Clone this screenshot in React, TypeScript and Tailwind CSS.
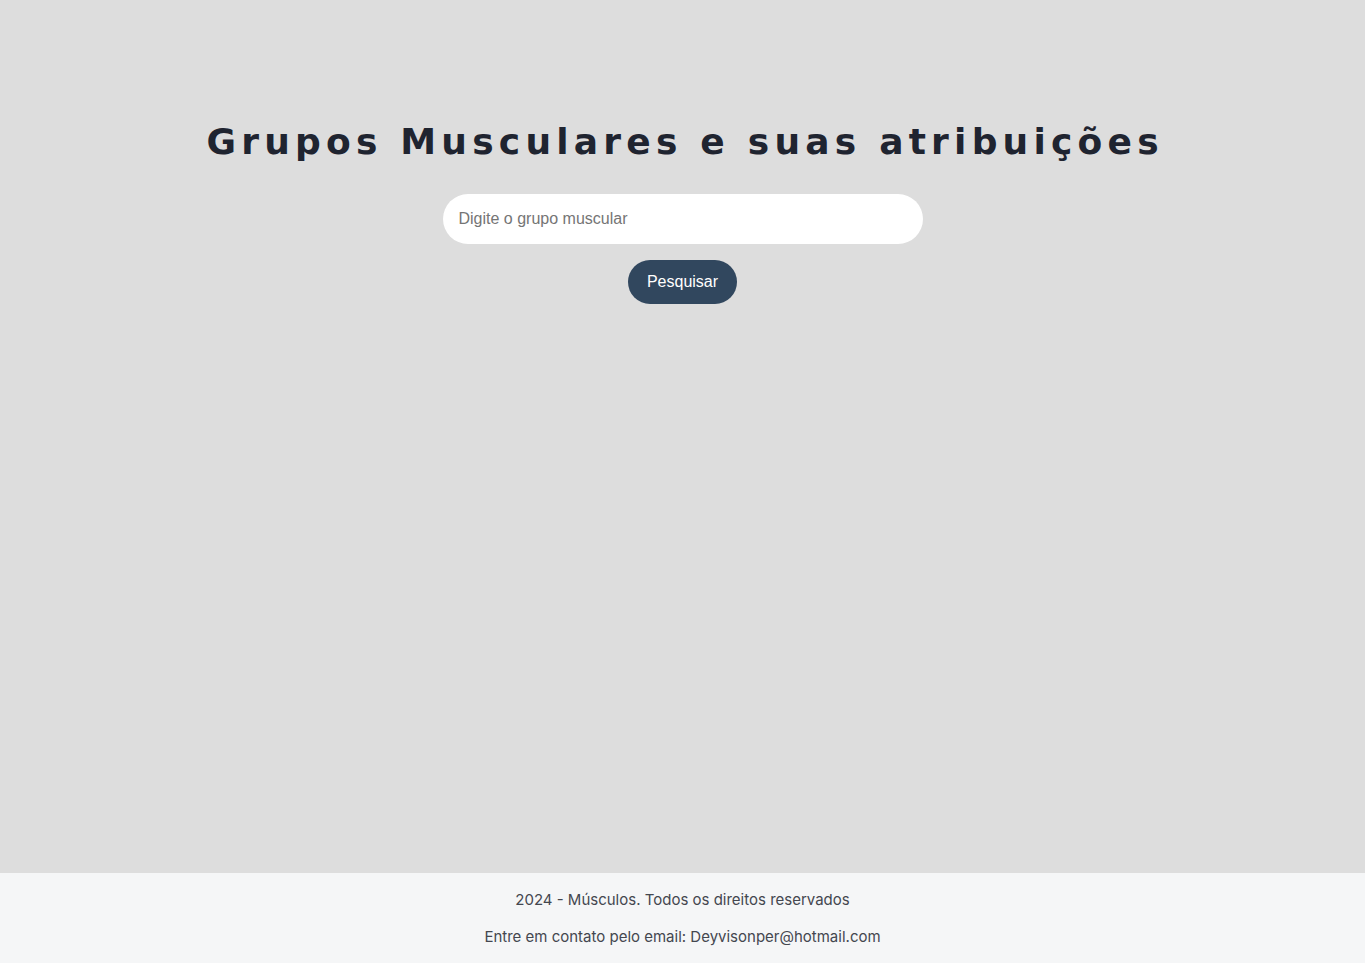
export default function App() {
  return (
    <div className="min-h-screen flex flex-col bg-[#dddddd]">
      <main className="flex-1 flex flex-col items-center pt-[118px]">
        <h1 className="font-['DejaVu_Sans',sans-serif] text-[36px] leading-[48px] font-bold tracking-[0.145em] mr-[-0.145em] text-[#1f2430]">
          Grupos Musculares e suas atribuições
        </h1>
        <input
          type="text"
          placeholder="Digite o grupo muscular"
          className="mt-[28px] w-[480px] h-[50px] rounded-full bg-white px-4 font-['Liberation_Sans',Arial,sans-serif] text-[16px] text-[#333] placeholder:text-[#757575] outline-none"
        />
        <button className="mt-4 h-[44px] px-[19px] rounded-full bg-[#31475e] text-white font-['Liberation_Sans',Arial,sans-serif] text-[16px]">
          Pesquisar
        </button>
      </main>
      <footer className="h-[90px] bg-[#f5f6f7] flex flex-col items-center pt-[17px] gap-[17px] font-['Inter',sans-serif] text-[15px] leading-[20px] text-[#44474f]">
        <p>2024 - Músculos. Todos os direitos reservados</p>
        <p>Entre em contato pelo email: Deyvisonper@hotmail.com</p>
      </footer>
    </div>
  );
}
